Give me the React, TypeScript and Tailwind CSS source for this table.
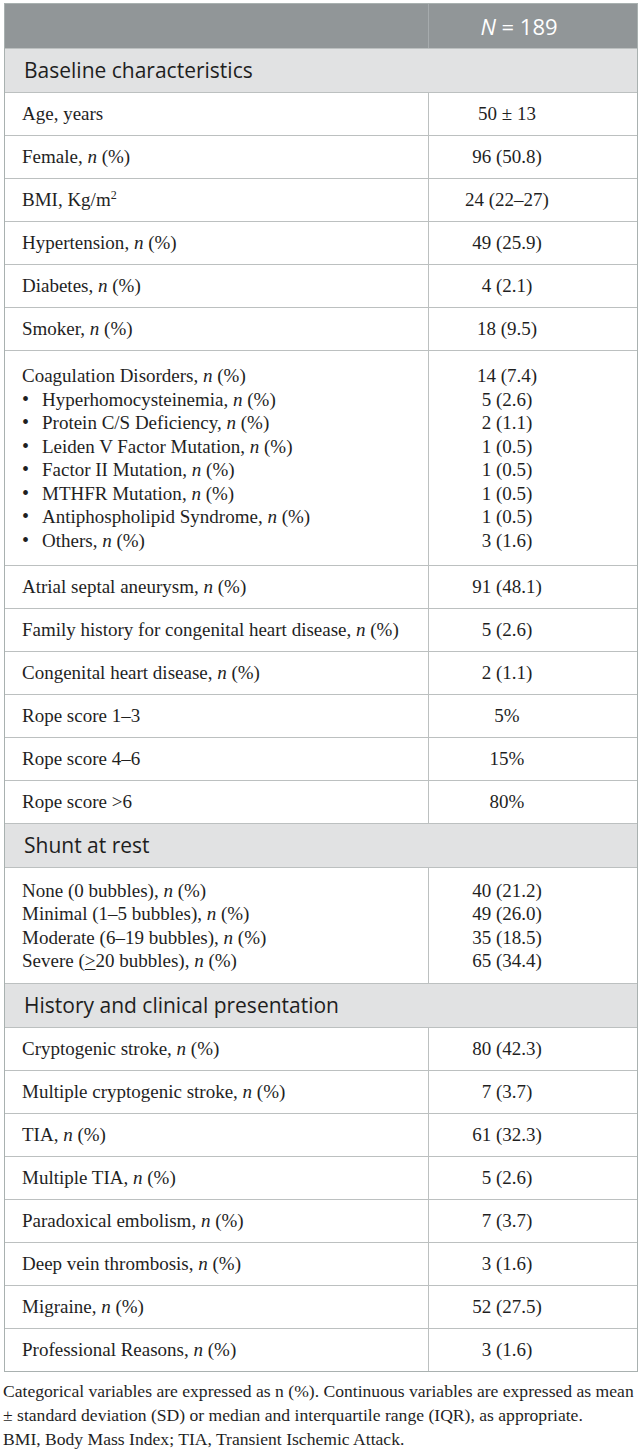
import React from "react";

type Row = { label: React.ReactNode; value: React.ReactNode };

const N = () => <i>n</i>;
const np = (t: string) => (
  <span>
    {t}, <N /> (%)
  </span>
);

const block1: Row[] = [
  { label: <span>Age, years</span>, value: "50 ± 13" },
  { label: np("Female"), value: "96 (50.8)" },
  {
    label: (
      <span>
        BMI, Kg/m<span className="text-[12px] relative top-[-7px]">2</span>
      </span>
    ),
    value: "24 (22–27)",
  },
  { label: np("Hypertension"), value: "49 (25.9)" },
  { label: np("Diabetes"), value: "4 (2.1)" },
  { label: np("Smoker"), value: "18 (9.5)" },
];

const Bullet = ({ t }: { t: string }) => (
  <span className="flex">
    <span className="w-[20px] text-[20px]">•</span>
    <span>
      {t}, <N /> (%)
    </span>
  </span>
);

const coag: Row[] = [
  { label: np("Coagulation Disorders"), value: "14 (7.4)" },
  { label: <Bullet t="Hyperhomocysteinemia" />, value: "5 (2.6)" },
  { label: <Bullet t="Protein C/S Deficiency" />, value: "2 (1.1)" },
  { label: <Bullet t="Leiden V Factor Mutation" />, value: "1 (0.5)" },
  { label: <Bullet t="Factor II Mutation" />, value: "1 (0.5)" },
  { label: <Bullet t="MTHFR Mutation" />, value: "1 (0.5)" },
  { label: <Bullet t="Antiphospholipid Syndrome" />, value: "1 (0.5)" },
  { label: <Bullet t="Others" />, value: "3 (1.6)" },
];

const block2: Row[] = [
  { label: np("Atrial septal aneurysm"), value: "91 (48.1)" },
  { label: np("Family history for congenital heart disease"), value: "5 (2.6)" },
  { label: np("Congenital heart disease"), value: "2 (1.1)" },
  { label: <span>Rope score 1–3</span>, value: "5%" },
  { label: <span>Rope score 4–6</span>, value: "15%" },
  { label: <span>Rope score &gt;6</span>, value: "80%" },
];

const shunt: Row[] = [
  { label: np("None (0 bubbles)"), value: "40 (21.2)" },
  { label: np("Minimal (1–5 bubbles)"), value: "49 (26.0)" },
  { label: np("Moderate (6–19 bubbles)"), value: "35 (18.5)" },
  {
    label: (
      <span>
        Severe (<span className="underline decoration-1 underline-offset-[2px]">&gt;</span>20 bubbles), <N /> (%)
      </span>
    ),
    value: "65 (34.4)",
  },
];

const history: Row[] = [
  { label: np("Cryptogenic stroke"), value: "80 (42.3)" },
  { label: np("Multiple cryptogenic stroke"), value: "7 (3.7)" },
  { label: np("TIA"), value: "61 (32.3)" },
  { label: np("Multiple TIA"), value: "5 (2.6)" },
  { label: np("Paradoxical embolism"), value: "7 (3.7)" },
  { label: np("Deep vein thrombosis"), value: "3 (1.6)" },
  { label: np("Migraine"), value: "52 (27.5)" },
  { label: np("Professional Reasons"), value: "3 (1.6)" },
];

function SingleRow({ r }: { r: Row }) {
  return (
    <div className="flex h-[43px] border-t border-[#bcc0c0]">
      <div className="w-[423px] pl-[17px] flex items-center whitespace-nowrap">{r.label}</div>
      <div className="flex-1 border-l border-[#bcc0c0] flex items-center justify-center pr-[52px] whitespace-nowrap">
        <span>{r.value}</span>
      </div>
    </div>
  );
}

function BlockRow({ rows, py }: { rows: Row[]; py: string }) {
  return (
    <div className="flex border-t border-[#bcc0c0]">
      <div className={`w-[423px] pl-[17px] ${py} leading-[23.5px]`}>
        {rows.map((r, i) => (
          <div key={i} className="whitespace-nowrap h-[23.5px]">
            {r.label}
          </div>
        ))}
      </div>
      <div className={`flex-1 border-l border-[#bcc0c0] ${py} leading-[23.5px] text-center pr-[52px]`}>
        {rows.map((r, i) => (
          <div key={i} className="whitespace-nowrap h-[23.5px]">
            {r.value}
          </div>
        ))}
      </div>
    </div>
  );
}

function Section({ title }: { title: string }) {
  return (
    <div className="h-[44px] bg-[#e1e2e3] border-t border-[#bcc0c0] flex items-center pl-[19px] [font-family:'Open_Sans',sans-serif] text-[21px] text-[#1e1e1e]">
      <span>{title}</span>
    </div>
  );
}

export default function App() {
  return (
    <div className="w-[642px] bg-white pt-[3px] pl-[4px] pr-[4px] [font-family:'Liberation_Serif',serif] text-[19px] text-[#1f1f1f]">
      <div className="border border-[#a9b1b0]">
        <div className="flex h-[44px] bg-[#919698]">
          <div className="w-[423px]" />
          <div className="flex-1 border-l border-[#a6abad] flex items-center justify-center pr-[28px] [font-family:'Open_Sans',sans-serif] text-[22px] text-white">
            <span>
              <i>N</i>&nbsp;=&nbsp;189
            </span>
          </div>
        </div>
        <Section title="Baseline characteristics" />
        {block1.map((r, i) => (
          <SingleRow key={i} r={r} />
        ))}
        <BlockRow rows={coag} py="py-[13px]" />
        {block2.map((r, i) => (
          <SingleRow key={i} r={r} />
        ))}
        <Section title="Shunt at rest" />
        <BlockRow rows={shunt} py="py-[10.5px]" />
        <Section title="History and clinical presentation" />
        {history.map((r, i) => (
          <SingleRow key={i} r={r} />
        ))}
      </div>
      <div className="mt-[7px] leading-[24px] text-[17.6px] ml-[-1px]">
        <div className="whitespace-nowrap">
          Categorical variables are expressed as n (%). Continuous variables are expressed as mean
        </div>
        <div className="whitespace-nowrap">
          ± standard deviation (SD) or median and interquartile range (IQR), as appropriate.
        </div>
        <div className="whitespace-nowrap">BMI, Body Mass Index; TIA, Transient Ischemic Attack.</div>
      </div>
    </div>
  );
}
